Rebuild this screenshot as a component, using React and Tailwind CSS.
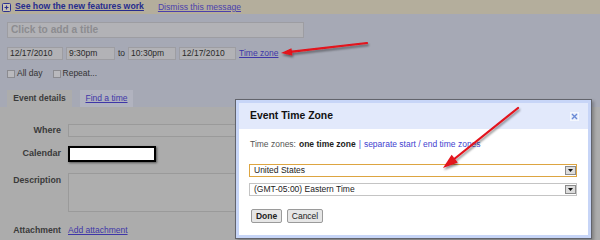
import React from 'react';

const Arrow = ({ x1, y1, x2, y2, head }) => (
  <g>
    <line x1={x1} y1={y1} x2={x2} y2={y2} stroke="#e3121b" strokeWidth="2.2" strokeLinecap="round" />
    <polygon points={head} fill="#e3121b" />
  </g>
);

const Select = ({ value, focused }) => (
  <div
    className={`flex h-[13px] w-[328px] items-center justify-between bg-white pl-[4px] ${
      focused ? 'border border-[#dda541]' : 'border border-[#c4c4c4]'
    }`}
  >
    <span className="text-[8.5px] leading-none text-[#222]">{value}</span>
    <span className="mr-[0px] flex h-[9px] w-[11px] items-center justify-center border border-[#8a8a8a] bg-[#dcdcdc]">
      <svg width="5" height="3" viewBox="0 0 5 3">
        <polygon points="0,0 5,0 2.5,3" fill="#111" />
      </svg>
    </span>
  </div>
);

export default function App() {
  return (
    <div className="relative h-[240px] w-[600px] overflow-hidden bg-[#a6a9b5] font-['Liberation_Sans',Arial,sans-serif] text-[8.5px] text-[#3b3b3b]">
      {/* yellow notice bar */}
      <div className="flex h-[14px] items-center bg-[#b4ae9c] pl-[2px]">
        <svg width="9" height="9" viewBox="0 0 9 9">
          <rect x="0.5" y="0.5" width="8" height="8" rx="1" fill="#c9c3b3" stroke="#2b3190" />
          <path d="M2.5 4.5h4M4.5 2.5v4" stroke="#2b3190" strokeWidth="1.2" />
        </svg>
        <a className="ml-[4px] text-[8.7px] font-bold text-[#262c8e] underline">See how the new features work</a>
        <a className="ml-[14px] text-[8.6px] text-[#4a3fae] underline">Dismiss this message</a>
      </div>

      <div className="px-[7px]">
        {/* title */}
        <div className="mt-[8px] flex h-[16px] w-[297px] items-center border border-[#9d9da2] bg-[#b2b2b6] pl-[3px]">
          <span className="text-[10.2px] font-bold text-[#8c8c90]">Click to add a title</span>
        </div>

        {/* date row */}
        <div className="mt-[9px] flex h-[13px] items-center">
          <div className="flex h-[13px] w-[56px] items-center border border-[#9d9da2] bg-[#b2b2b6] pl-[2px] text-[#2a2a2a]">12/17/2010</div>
          <div className="ml-[3px] flex h-[13px] w-[49px] items-center border border-[#9d9da2] bg-[#b2b2b6] pl-[2px] text-[#2a2a2a]">9:30pm</div>
          <span className="ml-[3px] text-[#2a2a2a]">to</span>
          <div className="ml-[3px] flex h-[13px] w-[48px] items-center border border-[#9d9da2] bg-[#b2b2b6] pl-[2px] text-[#2a2a2a]">10:30pm</div>
          <div className="ml-[3px] flex h-[13px] w-[57px] items-center border border-[#9d9da2] bg-[#b2b2b6] pl-[2px] text-[#2a2a2a]">12/17/2010</div>
          <a className="ml-[3px] text-[#3e36a8] underline">Time zone</a>
        </div>

        {/* checkboxes */}
        <div className="mt-[9px] flex h-[9px] items-center text-[#333]">
          <span className="h-[8px] w-[8px] border border-[#8b8b90] bg-[#b9b9bd]" />
          <span className="ml-[2px]">All day</span>
          <span className="ml-[10px] h-[8px] w-[8px] border border-[#8b8b90] bg-[#b9b9bd]" />
          <span className="ml-[2px]">Repeat...</span>
        </div>
      </div>

      {/* tabs */}
      <div className="mt-[12px] flex h-[17px] items-stretch pl-[7px]">
        <div className="flex w-[65px] items-center justify-center bg-[#acacac] font-bold text-[#3b3b3b]">Event details</div>
        <div className="ml-[8px] flex w-[53px] items-center justify-center bg-[#b1b3bf] text-[#3e36a8] underline">Find a time</div>
      </div>

      {/* details body */}
      <div className="h-[140px] bg-[#acacac] pt-[17px]">
        <div className="flex h-[13px] items-center">
          <span className="w-[61px] text-right text-[9px] font-bold text-[#3a3a3a]">Where</span>
          <div className="ml-[7px] h-[13px] w-[480px] border border-[#9a9a9a] bg-[#aeaeae]" />
        </div>
        <div className="mt-[9px] flex h-[16px] items-center">
          <span className="w-[61px] text-right text-[9px] font-bold text-[#3a3a3a]">Calendar</span>
          <div className="ml-[7px] h-[16px] w-[88px] border-2 border-black bg-white shadow-[1px_1px_2px_rgba(0,0,0,0.5)]" />
        </div>
        <div className="mt-[11px] flex items-start">
          <span className="w-[61px] pt-[1px] text-right text-[8.7px] font-bold text-[#3a3a3a]">Description</span>
          <div className="ml-[7px] h-[39px] w-[480px] border border-[#9a9a9a] bg-[#aeaeae]" />
        </div>
        <div className="mt-[13px] flex h-[11px] items-center">
          <span className="w-[61px] text-right text-[8.7px] font-bold text-[#3a3a3a]">Attachment</span>
          <a className="ml-[7px] text-[#3e36a8] underline">Add attachment</a>
        </div>
      </div>

      {/* time zone dialog */}
      <div className="absolute left-[235px] top-[99px] h-[140px] w-[357px] border border-[#62646c] bg-[#c7d5f7] p-[3px] shadow-[2px_2px_3px_rgba(0,0,0,0.25)]">
        <div className="flex h-full flex-col">
          <div className="flex h-[26px] items-center justify-between bg-[#e2e9fb] pl-[11px] pr-[9px]">
            <span className="text-[10.4px] font-bold text-[#111]">Event Time Zone</span>
            <span className="flex h-[9px] w-[9px] items-center justify-center border border-[#f4f7fd] bg-[#e8eefc]">
              <svg width="7" height="7" viewBox="0 0 7 7">
                <path d="M1 1l5 5M6 1l-5 5" stroke="#6b8bd6" strokeWidth="1.4" />
              </svg>
            </span>
          </div>
          <div className="flex-1 bg-white pl-[10px] pt-[10px]">
            <div className="flex h-[11px] items-center pl-[1px] text-[#555]">
              <span>Time zones:</span>
              <span className="ml-[3px] font-bold text-[#222]">one time zone</span>
              <span className="ml-[3px] text-[#4a4ad0]">|</span>
              <span className="ml-[3px] text-[#3f3fcf]">separate start / end time zones</span>
            </div>
            <div className="mt-[14px]">
              <Select value="United States" focused />
            </div>
            <div className="mt-[6px]">
              <Select value="(GMT-05:00) Eastern Time" />
            </div>
            <div className="mt-[13px] flex pl-[2px]">
              <button className="flex h-[14px] w-[31px] items-center justify-center rounded-[2px] border border-[#9a9a9a] bg-[#e6e6e6] text-[8.5px] font-bold text-[#222]">
                Done
              </button>
              <button className="ml-[5px] flex h-[14px] w-[36px] items-center justify-center rounded-[2px] border border-[#9a9a9a] bg-[#e6e6e6] text-[8.5px] text-[#222]">
                Cancel
              </button>
            </div>
          </div>
        </div>
      </div>

      {/* red annotation arrows */}
      <svg className="pointer-events-none absolute left-0 top-0" width="600" height="240" viewBox="0 0 600 240">
        <defs>
          <filter id="sh" x="-20%" y="-20%" width="140%" height="140%">
            <feDropShadow dx="1" dy="2" stdDeviation="1" floodColor="#000" floodOpacity="0.45" />
          </filter>
        </defs>
        <g filter="url(#sh)">
          <Arrow x1={367} y1={43} x2={290} y2={51.8} head="281,53 292.3,55.4 291.5,48.2" />
          <Arrow x1={518} y1={108} x2={453} y2={160} head="443,168 457.8,162.5 451.6,154.7" />
        </g>
      </svg>
    </div>
  );
}
